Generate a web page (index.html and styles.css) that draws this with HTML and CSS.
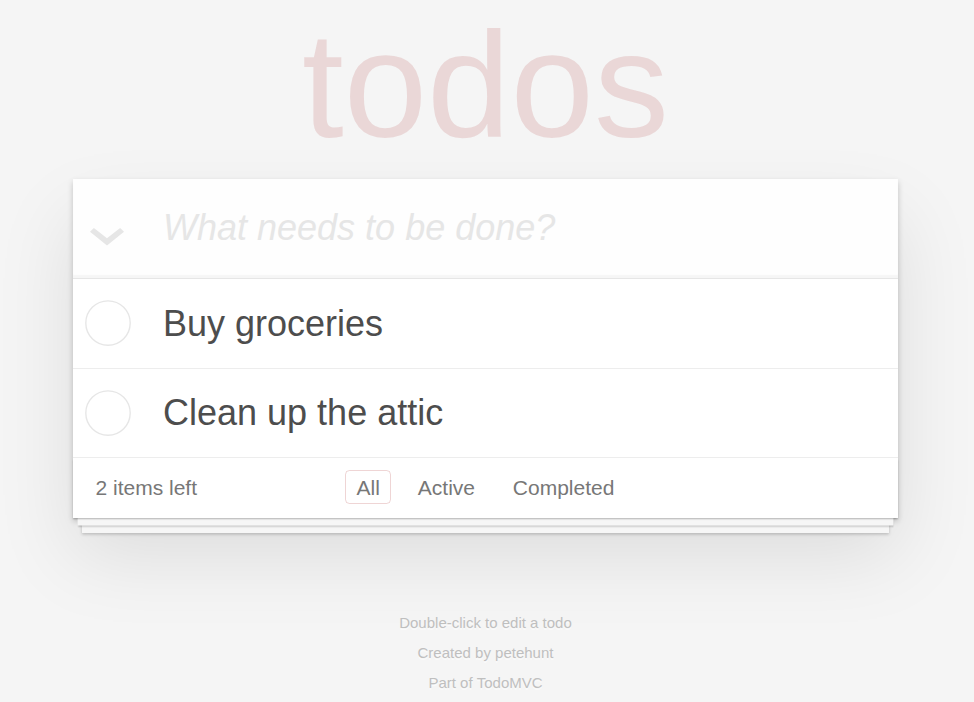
FILE: index.html
```html
<!DOCTYPE html>
<html lang="en">
<head>
<meta charset="utf-8">
<title>React • TodoMVC</title>
<link rel="stylesheet" href="styles.css">
</head>
<body>
<div class="page">
  <section class="todoapp">
    <h1 class="title">todos</h1>
    <div class="panel">
      <header class="header">
        <div class="toggle-all">
          <svg class="chevron" width="34" height="18" viewBox="0 0 34 18" aria-hidden="true">
            <polygon points="0,3.8 3.9,0 17,10.2 30.1,0 34,3.8 17,17.6" fill="#e6e6e6"/>
          </svg>
        </div>
        <input class="new-todo" type="text" placeholder="What needs to be done?">
      </header>
      <ul class="todo-list">
        <li class="todo">
          <span class="toggle">
            <svg width="46" height="46" viewBox="0 0 46 46" aria-hidden="true"><circle cx="23" cy="23" r="22.2" fill="none" stroke="#e6e6e6" stroke-width="1.35"/></svg>
          </span>
          <label class="todo-label">Buy groceries</label>
        </li>
        <li class="todo">
          <span class="toggle">
            <svg width="46" height="46" viewBox="0 0 46 46" aria-hidden="true"><circle cx="23" cy="23" r="22.2" fill="none" stroke="#e6e6e6" stroke-width="1.35"/></svg>
          </span>
          <label class="todo-label">Clean up the attic</label>
        </li>
      </ul>
      <footer class="footer">
        <span class="todo-count"><strong class="count-num">2</strong> items left</span>
        <ul class="filters">
          <li><a class="filter selected" href="#/">All</a></li>
          <li><a class="filter" href="#/active">Active</a></li>
          <li><a class="filter" href="#/completed">Completed</a></li>
        </ul>
        <span class="spacer"></span>
      </footer>
    </div>
  </section>
  <footer class="info">
    <p class="info-line">Double-click to edit a todo</p>
    <p class="info-line">Created by <a class="info-link" href="#">petehunt</a></p>
    <p class="info-line">Part of <a class="info-link" href="#">TodoMVC</a></p>
  </footer>
</div>
</body>
</html>
```

FILE: styles.css
```css
html, body {
  margin: 0;
  padding: 0;
}

body {
  background: #f5f5f5;
  color: #4d4d4d;
  font-family: "Liberation Sans", Arial, Helvetica, sans-serif;
  font-size: 21px;
  font-weight: 300;
  padding-top: 10px;
  padding-right: 3px;
}

.page {
  width: 825px;
  margin: 0 auto;
}

.todoapp {
  margin: 0;
}

.title {
  margin: 0 0 19px;
  font-size: 150px;
  line-height: 150px;
  font-weight: 100;
  text-align: center;
  color: rgba(175, 47, 47, 0.15);
}

.panel {
  background: #fff;
  box-shadow: 0 3px 6px 0 rgba(0, 0, 0, 0.2), 0 37.5px 75px 0 rgba(0, 0, 0, 0.1);
}

.header {
  display: flex;
  height: 99.4px;
  background: rgba(0, 0, 0, 0.003);
  box-shadow: inset 0 -3px 1.5px rgba(0, 0, 0, 0.035);
  border-bottom: 1px solid #e6e6e6;
}

.toggle-all {
  flex: 0 0 90px;
  box-sizing: border-box;
  padding: 48.5px 0 0 16.7px;
}

.chevron {
  display: block;
}

.new-todo {
  flex: 1;
  min-width: 0;
  margin: 0;
  border: 0;
  outline: none;
  background: transparent;
  font-family: inherit;
  font-size: 36px;
  font-weight: 300;
  line-height: 50.4px;
  color: #4d4d4d;
  padding: 24px 24px 24px 0;
  box-sizing: border-box;
  height: 98.4px;
}

.new-todo::placeholder {
  font-style: italic;
  font-weight: 300;
  color: #e6e6e6;
}

.todo-list {
  margin: 0;
  padding: 0;
  list-style: none;
}

.todo {
  display: flex;
  align-items: center;
  border-bottom: 1px solid #ededed;
  font-size: 36px;
}

.toggle {
  flex: 0 0 90px;
  display: flex;
  align-items: center;
  box-sizing: border-box;
  padding-left: 11.5px;
}

.toggle svg {
  display: block;
}

.todo-label {
  display: block;
  padding: 22.5px 22.5px 22.5px 0;
  line-height: 1.2;
  color: #4d4d4d;
}

.footer {
  display: grid;
  grid-template-columns: 1fr auto 1fr;
  align-items: center;
  height: 30px;
  padding: 15px 22.5px;
  line-height: 30px;
  color: #777;
  box-shadow: 0 1.5px 1.5px rgba(0, 0, 0, 0.2),
              0 12px 0 -4.5px #f6f6f6,
              0 13.5px 1.5px -4.5px rgba(0, 0, 0, 0.2),
              0 24px 0 -9px #f6f6f6,
              0 25.5px 3px -9px rgba(0, 0, 0, 0.2);
}

.todo-count {
  text-align: left;
}

.count-num {
  font-weight: 300;
}

.filters {
  margin: 0;
  padding: 0;
  list-style: none;
  text-align: center;
  white-space: nowrap;
}

.filters li {
  display: inline;
}

.filter {
  color: inherit;
  margin: 4.5px;
  padding: 4.5px 10.5px;
  text-decoration: none;
  border: 1px solid transparent;
  border-radius: 4.5px;
}

.filter.selected {
  border-color: rgba(175, 47, 47, 0.2);
}

.info {
  margin: 97.5px auto 0;
  color: #bfbfbf;
  font-size: 15px;
  text-shadow: 0 1.5px 0 rgba(255, 255, 255, 0.5);
  text-align: center;
}

.info-line {
  margin: 0 0 15px;
  line-height: 1;
}

.info-link {
  color: inherit;
  text-decoration: none;
  font-weight: 400;
}
```
